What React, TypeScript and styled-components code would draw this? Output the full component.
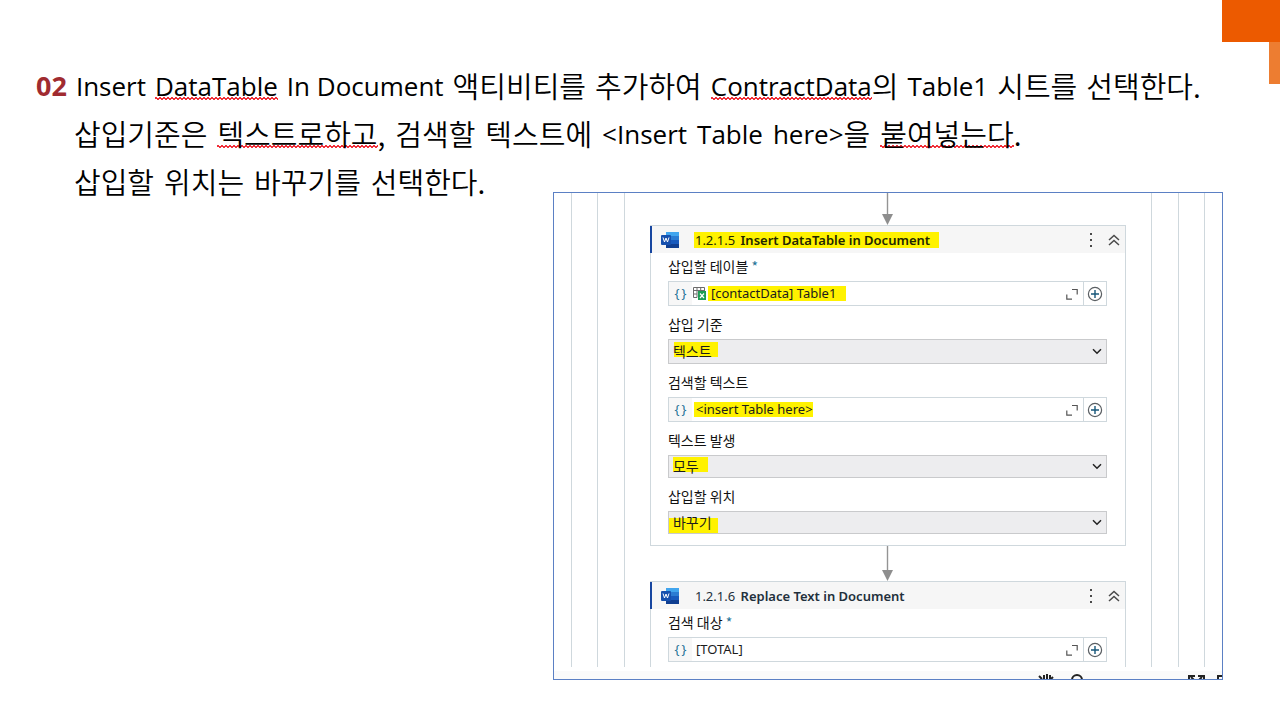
import React from "react";
import styled, { createGlobalStyle, css } from "styled-components";

const latin = `"Noto Sans", "Noto Sans CJK KR", sans-serif`;
const hangul = `"Noto Sans CJK KR", sans-serif`;
const line = "#cfd8dd";

const GlobalStyle = createGlobalStyle`
  *, *::before, *::after { box-sizing: border-box; }
  body { margin: 0; background: #fff; color: #000; font-family: ${latin}; }
`;

const Slide = styled.main`
  position: relative;
  padding: 62px 57px 21px 36px;
`;

const Corner = styled.div`
  position: absolute;
  top: 0;
  right: 0;
  display: flex;
  flex-direction: column;
  align-items: flex-end;
`;

const Block = styled.div<{ $small?: boolean }>`
  width: ${(p) => (p.$small ? 11 : 58)}px;
  height: 42px;
  background: ${(p) => (p.$small ? "#ed7d31" : "#ec5a00")};
`;

const Line = styled.p<{ $indent?: boolean }>`
  display: flex;
  gap: ${(p) => (p.$indent ? 10 : 9)}px;
  height: 48px;
  margin: 0;
  padding-left: ${(p) => (p.$indent ? 38 : 0)}px;
  line-height: 48px;
  white-space: nowrap;
`;

const StepNumber = styled.strong`
  font-size: 27px;
  font-weight: 700;
  color: #a02b30;
`;

const Word = styled.span`
  display: flex;
`;

const squiggle = css`
  background-image: linear-gradient(45deg, transparent 38%, #f0303a 38% 64%, transparent 64%),
    linear-gradient(135deg, transparent 38%, #f0303a 38% 64%, transparent 64%);
  background-size: 4px 3px;
  background-position: 0 35px, 2px 35px;
  background-repeat: repeat-x;
`;

const En = styled.span<{ $wavy?: boolean }>`
  font-family: "Open Sans", ${latin};
  font-size: 26px;
  font-weight: 400;
  ${(p) => p.$wavy && squiggle}
`;

const Ko = styled.span<{ $wavy?: boolean }>`
  font-family: ${hangul};
  font-size: 29px;
  font-weight: 350;
  line-height: 46px;
  ${(p) => p.$wavy && squiggle}
`;

const Panel = styled.section`
  width: 56.45%;
  margin: -14px 0 0 auto;
  height: 488px;
  overflow: hidden;
  border: 1px solid #5b80c4;
  display: flex;
  flex-direction: column;
`;

const Canvas = styled.div`
  height: 474px;
  padding: 0 17px;
  overflow: hidden;
`;

const Nest = styled.div<{ $pad: number }>`
  min-height: 474px;
  padding: 0 ${(p) => p.$pad}px;
  border: solid ${line};
  border-width: 0 1px;
`;

const Connector = styled.svg`
  display: block;
  margin: 0 auto;
`;

const Card = styled.article`
  border: 1px solid ${line};
  padding-bottom: 11px;
`;

const CardHeader = styled.header`
  display: flex;
  align-items: center;
  height: 27px;
  margin-left: -1px;
  padding: 0 0 0 9px;
  border-left: 2px solid #1746a0;
  background: #f6f6f6;
`;

const Title = styled.h2<{ $marked?: boolean }>`
  margin: 0 auto 0 14px;
  padding: 0 9px 0 1px;
  font-size: 13px;
  line-height: 16px;
  font-weight: 600;
  color: ${(p) => (p.$marked ? "#222600" : "#22303c")};
  background: ${(p) => (p.$marked ? "#fff200" : "none")};
`;

const Index = styled.span`
  font-weight: 400;
  margin-right: 2px;
`;

const IconButton = styled.button`
  display: flex;
  align-items: center;
  justify-content: center;
  width: 23px;
  height: 23px;
  padding: 0;
  border: 0;
  background: none;
`;

const Field = styled.div`
  padding: 0 18px 0 17px;
  & + & { margin-top: 5px; }
`;

const Label = styled.label`
  display: block;
  padding-bottom: 2px;
  font-family: ${hangul};
  font-size: 14px;
  line-height: 26px;
  color: #111;
`;

const Required = styled.span`
  color: #1f7296;
`;

type Mark = { x: number; y: number; w: number };

const marked = css<{ $mark?: Mark }>`
  ${(p) =>
    p.$mark &&
    css`
      background-image: linear-gradient(#fff200, #fff200);
      background-repeat: no-repeat;
      background-position: ${p.$mark.x}px ${p.$mark.y}px;
      background-size: ${p.$mark.w}px 15px;
    `}
`;

const InputRow = styled.div`
  display: flex;
  align-items: stretch;
  height: 25px;
  border: 1px solid ${line};
  background: #fff;
`;

const Braces = styled.span`
  width: 23px;
  font-size: 13px;
  line-height: 22px;
  text-align: center;
  color: #1f7296;
  background: #f7f7f7;
`;

const TextInput = styled.input<{ $mark?: Mark }>`
  flex: 1;
  min-width: 0;
  padding: 0 0 1px 4px;
  border: 0;
  background-color: transparent;
  font-family: ${latin};
  font-size: 13px;
  color: #1c1c1c;
  ${marked}
`;

const AddButton = styled(IconButton)`
  border-left: 1px solid ${line};
`;

const SelectWrap = styled.div`
  display: grid;
  align-items: center;
  & > * { grid-area: 1 / 1; }
`;

const Select = styled.select<{ $tall?: boolean; $mark?: Mark }>`
  appearance: none;
  width: 100%;
  height: ${(p) => (p.$tall ? 25 : 23)}px;
  padding: 0 24px 2px 4px;
  border: 1px solid #c9cacc;
  border-radius: 0;
  background-color: #ededef;
  font-family: ${hangul};
  font-size: 14px;
  line-height: 20px;
  color: #1c1c1c;
  ${marked}
`;

const Chevron = styled.svg`
  justify-self: end;
  margin-right: 5px;
  pointer-events: none;
`;

const ToolStrip = styled.footer`
  display: flex;
  justify-content: flex-end;
  margin-top: 4px;
  height: 8px;
  overflow: hidden;
  background: #fafafa;
`;

const Arrow = ({ height }: { height: number }) => (
  <Connector width="12" height={height} viewBox={`0 0 12 ${height}`} aria-hidden="true">
    <path d={`M5.500 0V${height - 9}`} stroke="#949494" strokeWidth="1.4" />
    <path d={`M0 ${height - 11}H11L5.500 ${height}Z`} fill="#8e8e8e" />
  </Connector>
);

const WordIcon = () => (
  <svg width="19" height="18" viewBox="0 0 19 18" aria-hidden="true">
    <rect x="5" y="1" width="13" height="4" fill="#41a5ee" />
    <rect x="5" y="5" width="13" height="4" fill="#2b7cd3" />
    <rect x="5" y="9" width="13" height="4" fill="#185abd" />
    <rect x="5" y="13" width="13" height="4" fill="#103f91" />
    <rect x="0" y="4" width="10" height="10" rx="1" fill="#1650ae" />
    <path d="M2 6.5L3.5 11L5 7L6.500 11L8 6.500" fill="none" stroke="#fff" />
  </svg>
);

const SheetIcon = () => (
  <svg width="15" height="23" viewBox="0 0 15 23" aria-hidden="true">
    <path d="M1.500 5.500H12.500V9M1.500 5.500V15.500H5M1.500 8.500H12M1.500 12H5M5 5.500V15.500M8.700 5.500V9" fill="none" stroke="#6c6c6c" />
    <rect x="6" y="9" width="8" height="9" fill="#1f9d55" />
    <path d="M8 11.500L12 16M12 11.500L8 16" stroke="#fff" strokeWidth="1.200" />
  </svg>
);

const ExpandButton = () => (
  <IconButton type="button" aria-label="확장">
    <svg width="12" height="12" viewBox="0 0 12 12" fill="none" stroke="#555" strokeWidth="1.2">
      <path d="M6 1.500H11.200V6.500M0.800 6.500V11.200H6" />
    </svg>
  </IconButton>
);

const PlusButton = () => (
  <AddButton type="button" aria-label="추가">
    <svg width="16" height="16" viewBox="0 0 16 16" fill="none">
      <circle cx="8" cy="8" r="6.600" stroke="#5a5f63" strokeWidth="1.200" />
      <path d="M8 4V12M4 8H12" stroke="#17577a" strokeWidth="1.400" />
    </svg>
  </AddButton>
);

type HeaderProps = { index: string; name: string; marked?: boolean };

const ActivityHeader = ({ index, name, marked }: HeaderProps) => (
  <CardHeader>
    <WordIcon />
    <Title $marked={marked}>
      <Index>{index}</Index> {name}
    </Title>
    <IconButton type="button" aria-label="메뉴">
      <svg width="4" height="16" viewBox="0 0 4 16" fill="#4a4a4a">
        <rect x="1" y="1" width="2" height="2" />
        <rect x="1" y="7" width="2" height="2" />
        <rect x="1" y="13" width="2" height="2" />
      </svg>
    </IconButton>
    <IconButton type="button" aria-label="접기">
      <svg width="12" height="12" viewBox="0 0 12 12" fill="none" stroke="#4a4a4a" strokeWidth="1.500">
        <path d="M1 6L6 1.500L11 6M1 11L6 6.500L11 11" />
      </svg>
    </IconButton>
  </CardHeader>
);

type FieldProps = { id: string; label: string; value: string; mark?: Mark };

const InputField = ({ id, label, value, mark, required, sheet }: FieldProps & { required?: boolean; sheet?: boolean }) => (
  <Field>
    <Label htmlFor={id}>
      {label} {required && <Required>*</Required>}
    </Label>
    <InputRow>
      <Braces>{"{\u2009}"}</Braces>
      {sheet && <SheetIcon />}
      <TextInput id={id} defaultValue={value} $mark={mark} />
      <ExpandButton />
      <PlusButton />
    </InputRow>
  </Field>
);

const SelectField = ({ id, label, value, mark, tall }: FieldProps & { tall?: boolean }) => (
  <Field>
    <Label htmlFor={id}>{label}</Label>
    <SelectWrap>
      <Select id={id} $mark={mark} $tall={tall}>
        <option>{value}</option>
      </Select>
      <Chevron width="10" height="7" viewBox="0 0 10 7" fill="none" stroke="#222" strokeWidth="1.500">
        <path d="M1 1.200L5 5.200L9 1.200" />
      </Chevron>
    </SelectWrap>
  </Field>
);

export default function App() {
  return (
    <>
      <GlobalStyle />
      <Slide>
        <Corner>
          <Block />
          <Block $small />
        </Corner>

        <Line>
          <StepNumber>02</StepNumber>
          <En>Insert</En>
          <En $wavy>DataTable</En>
          <En>In Document</En>
          <Ko>액티비티를</Ko>
          <Ko>추가하여</Ko>
          <Word>
            <En $wavy>ContractData</En>
            <Ko>의</Ko>
          </Word>
          <En>Table1</En>
          <Ko>시트를</Ko>
          <Ko>선택한다.</Ko>
        </Line>
        <Line $indent>
          <Ko>삽입기준은</Ko>
          <Word>
            <Ko $wavy>텍스트로하고</Ko>
            <Ko>,</Ko>
          </Word>
          <Ko>검색할</Ko>
          <Ko>텍스트에</Ko>
          <En>&lt;Insert</En>
          <En>Table</En>
          <Word>
            <En>here&gt;</En>
            <Ko>을</Ko>
          </Word>
          <Word>
            <Ko $wavy>붙여넣는다</Ko>
            <Ko>.</Ko>
          </Word>
        </Line>
        <Line $indent>
          <Ko>삽입할</Ko>
          <Ko>위치는</Ko>
          <Ko>바꾸기를</Ko>
          <Ko>선택한다.</Ko>
        </Line>

        <Panel>
          <Canvas>
            <Nest $pad={25}>
              <Nest $pad={26}>
                <Nest $pad={25}>
                  <Arrow height={32} />
                  <Card>
                    <ActivityHeader index="1.2.1.5" name="Insert DataTable in Document" marked />
                    <InputField id="table" label="삽입할 테이블" value="[contactData] Table1" required sheet mark={{ x: 1, y: 4, w: 138 }} />
                    <SelectField id="basis" label="삽입 기준" value="텍스트" tall mark={{ x: 5, y: 2, w: 44 }} />
                    <InputField id="search" label="검색할 텍스트" value="<insert Table here>" mark={{ x: 2, y: 4, w: 119 }} />
                    <SelectField id="occurrence" label="텍스트 발생" value="모두" mark={{ x: 4, y: 1, w: 35 }} />
                    <SelectField id="position" label="삽입할 위치" value="바꾸기" mark={{ x: 0, y: 6, w: 49 }} />
                  </Card>
                  <Arrow height={35} />
                  <Card>
                    <ActivityHeader index="1.2.1.6" name="Replace Text in Document" />
                    <InputField id="target" label="검색 대상" value="[TOTAL]" required />
                  </Card>
                </Nest>
              </Nest>
            </Nest>
          </Canvas>
          <ToolStrip>
            <svg width="186" height="8" viewBox="0 0 186 8" aria-hidden="true">
              <path d="M6 8L3 5M8 8V4M11 8V3M14 8V4M17 6L15 8" stroke="#222" strokeWidth="2" />
              <path d="M36 9A5 5 0 0 1 46 9" fill="none" stroke="#222" strokeWidth="2" />
              <path d="M153 8V5H159M162 5H168V8M155 6L158 9M166 6L163 9" fill="none" stroke="#222" strokeWidth="2" />
              <path d="M182 8V5H186" fill="none" stroke="#222" strokeWidth="2" />
            </svg>
          </ToolStrip>
        </Panel>
      </Slide>
    </>
  );
}
